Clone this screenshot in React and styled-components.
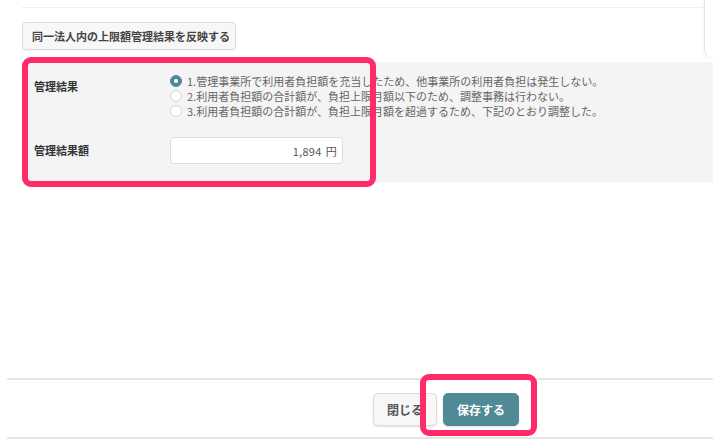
import React from "react";
import styled, { createGlobalStyle } from "styled-components";

const Global = createGlobalStyle`
  html, body { margin: 0; padding: 0; background: #fff; }
  body { font-family: "Noto Sans CJK JP", "Noto Sans", sans-serif; color: #333; }
  * { box-sizing: border-box; }
`;

const Page = styled.div`
  width: 713px;
  height: 445px;
  display: flex;
  flex-direction: column;
  overflow: hidden;
`;

const TopStrip = styled.div`
  display: flex;
  height: 58px;
`;

const TopLeft = styled.div`
  flex: 1;
  padding-left: 22px;
  display: flex;
  flex-direction: column;
`;

const TopLine = styled.div`
  height: 8px;
  border-bottom: 1px solid #efefef;
  margin-right: 1px;
`;

const ReflectButton = styled.button`
  margin-top: 14px;
  width: 214px;
  height: 28px;
  background: #f7f7f7;
  border: 1px solid #dcdcdc;
  border-radius: 4px;
  font-family: inherit;
  font-size: 11px;
  font-weight: 700;
  color: #444;
  padding: 0 9px;
  text-align: left;
  white-space: nowrap;
  box-shadow: 0 1px 1px rgba(0, 0, 0, 0.06);
`;

const RightTab = styled.div`
  width: 9px;
  height: 58px;
  border-left: 1px solid #e4e4e4;
  border-bottom-left-radius: 16px;
  box-shadow: -1px 1px 2px rgba(0, 0, 0, 0.04);
`;

const Panel = styled.div`
  position: relative;
  margin: 4px 0 0 22px;
  height: 120px;
  background: #f4f4f4;
  padding: 11px 0 0 12px;
  display: flex;
  flex-direction: column;
  gap: 19px;
`;

const FieldRow = styled.div`
  display: grid;
  grid-template-columns: 136px 1fr;
  align-items: ${(p) => (p.$center ? "center" : "start")};
`;

const Label = styled.div`
  font-size: 11px;
  font-weight: 700;
  color: #333;
  line-height: 15px;
  padding-top: ${(p) => p.$offset || 0}px;
`;

const RadioList = styled.div`
  display: flex;
  flex-direction: column;
`;

const RadioLine = styled.label`
  display: flex;
  align-items: center;
  gap: 5px;
  height: 15px;
  font-size: 11px;
  color: #666;
  white-space: nowrap;
`;

const RadioDot = styled.span`
  width: 12px;
  height: 12px;
  border-radius: 50%;
  flex: none;
  display: flex;
  align-items: center;
  justify-content: center;
  background: ${(p) => (p.$checked ? "#4f8a96" : "#fff")};
  border: 1px solid ${(p) => (p.$checked ? "#4f8a96" : "#d4d4d4")};
  &::after {
    content: "";
    width: 4px;
    height: 4px;
    border-radius: 50%;
    background: ${(p) => (p.$checked ? "#fff" : "transparent")};
  }
`;

const AmountBox = styled.div`
  width: 173px;
  height: 27px;
  background: #fff;
  border: 1px solid #dcdcdc;
  border-radius: 4px;
  display: flex;
  align-items: center;
  justify-content: flex-end;
  padding-right: 5px;
  font-size: 11px;
  color: #555;
  gap: 4px;
  letter-spacing: 0.3px;
`;

const PinkFrame = styled.div`
  position: absolute;
  border: 6px solid #ff2a6a;
  border-radius: 9px;
  pointer-events: none;
`;

const Footer = styled.div`
  margin: 196px 0 0 7px;
  border-top: 2px solid #ece4de;
  border-bottom: 2px solid #ece4de;
  height: 61px;
  display: flex;
  align-items: flex-start;
  padding: 13px 0 0 366px;
  gap: 6px;
`;

const FooterButton = styled.button`
  height: 33px;
  border-radius: 5px;
  font-family: inherit;
  font-size: 12px;
  font-weight: 700;
  padding: 0;
  width: ${(p) => p.$w}px;
  background: ${(p) => (p.$primary ? "#4f8a96" : "#f7f7f7")};
  color: ${(p) => (p.$primary ? "#fff" : "#555")};
  border: 1px solid ${(p) => (p.$primary ? "#4f8a96" : "#dcdcdc")};
  box-shadow: 0 1px 2px rgba(0, 0, 0, 0.12);
`;

const SaveWrap = styled.div`
  position: relative;
`;

const options = [
  "1.管理事業所で利用者負担額を充当したため、他事業所の利用者負担は発生しない。",
  "2.利用者負担額の合計額が、負担上限月額以下のため、調整事務は行わない。",
  "3.利用者負担額の合計額が、負担上限月額を超過するため、下記のとおり調整した。",
];

export default function App() {
  return (
    <>
      <Global />
      <Page>
        <TopStrip>
          <TopLeft>
            <TopLine />
            <ReflectButton>同一法人内の上限額管理結果を反映する</ReflectButton>
          </TopLeft>
          <RightTab />
        </TopStrip>
        <Panel>
          <FieldRow>
            <Label $offset={6}>管理結果</Label>
            <RadioList>
              {options.map((o, i) => (
                <RadioLine key={i}>
                  <RadioDot $checked={i === 0} />
                  {o}
                </RadioLine>
              ))}
            </RadioList>
          </FieldRow>
          <FieldRow $center>
            <Label>管理結果額</Label>
            <AmountBox>
              <span>1,894</span>
              <span>円</span>
            </AmountBox>
          </FieldRow>
          <PinkFrame style={{ left: 0, top: -5, width: 354, height: 130 }} />
        </Panel>
        <Footer>
          <FooterButton $w={64}>閉じる</FooterButton>
          <SaveWrap>
            <FooterButton $primary $w={76}>保存する</FooterButton>
            <PinkFrame style={{ left: -23, top: -19, width: 117, height: 62 }} />
          </SaveWrap>
        </Footer>
      </Page>
    </>
  );
}
